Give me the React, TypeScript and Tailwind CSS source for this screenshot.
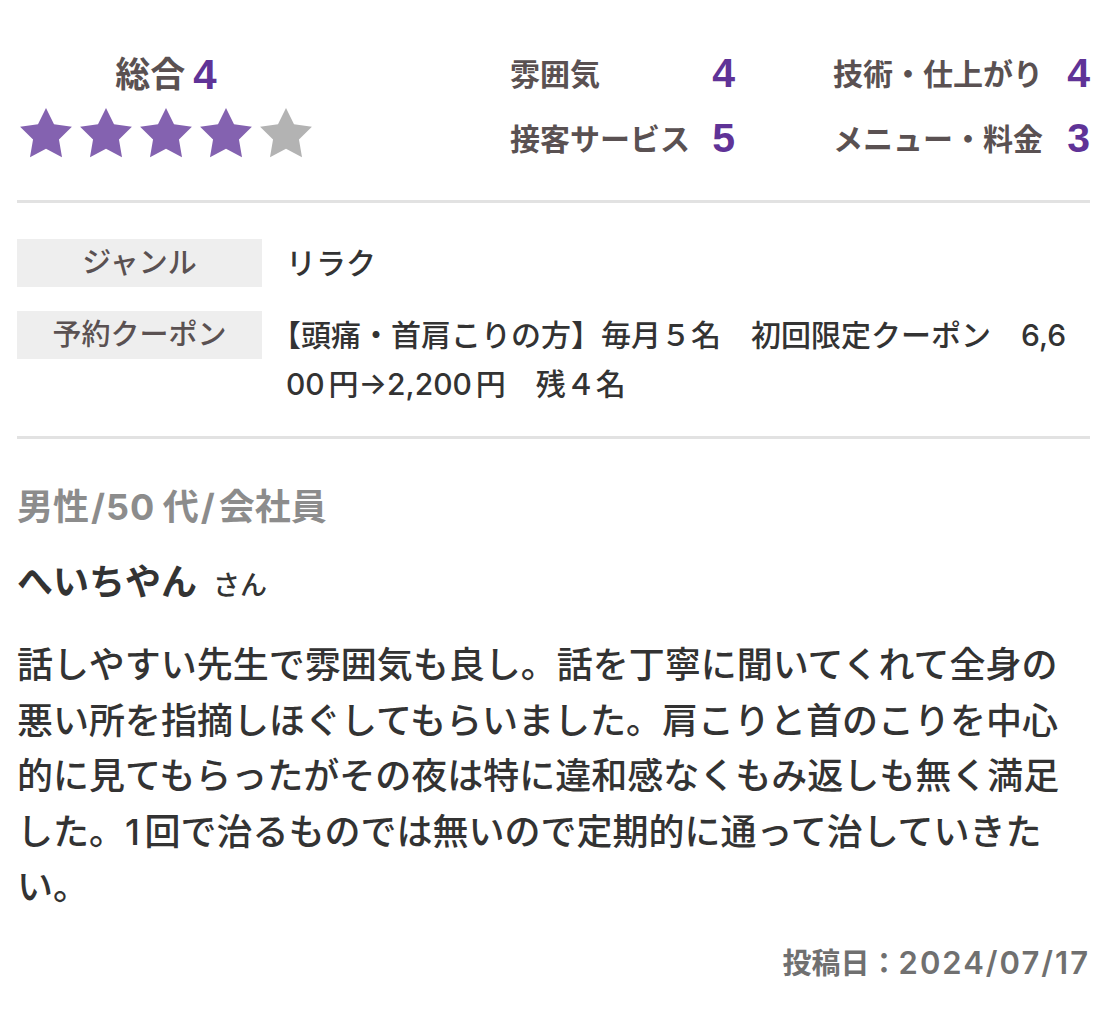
const jp = "font-['Inter','Noto_Sans_CJK_JP',sans-serif]";
const num = "font-['Liberation_Sans','Noto_Sans_CJK_JP',sans-serif] font-bold text-[#5f3397]";

const scores = [
  { label: "雰囲気", value: 4 },
  { label: "技術・仕上がり", value: 4 },
  { label: "接客サービス", value: 5 },
  { label: "メニュー・料金", value: 3 },
];

function Star({ filled }: { filled: boolean }) {
  return (
    <svg width="52" height="50" viewBox="2 2 20 19.3">
      <polygon
        points="12,2 15.09,8.26 22,9.27 17,14.14 18.18,21.02 12,17.77 5.82,21.02 7,14.14 2,9.27 8.91,8.26"
        fill={filled ? "#8462b0" : "#b3b3b3"}
      />
    </svg>
  );
}

export default function App() {
  return (
    <div className={`${jp} [text-autospace:normal] bg-white min-h-screen pl-[17px] pr-[18px] pt-[50px] pb-[40px]`}>
      {/* Ratings */}
      <div className="flex items-start">
        <div className="w-[298px] flex flex-col items-center">
          <div className="h-[48px] flex items-center gap-[8px]">
            <span className="text-[35px] font-bold text-[#5a5152]">総合</span>
            <span className={`${num} text-[42px]`}>4</span>
          </div>
          <div className="flex gap-[8px] mt-[10px]">
            {[1, 2, 3, 4, 5].map((i) => (
              <Star key={i} filled={i <= 4} />
            ))}
          </div>
        </div>
        <div className="ml-auto grid grid-cols-[225px_257px] gap-x-[98px] gap-y-[17px]">
          {scores.map((s) => (
            <div key={s.label} className="h-[48px] flex items-center justify-between">
              <span className="text-[30px] font-bold text-[#5a5152]">{s.label}</span>
              <span className={`${num} text-[41px]`}>{s.value}</span>
            </div>
          ))}
        </div>
      </div>

      <div className="h-[3px] bg-[#e2e2e2] mt-[37px]" />

      {/* Details */}
      <div className="grid grid-cols-[245px_1fr] gap-x-[24px] gap-y-[24px] mt-[36px]">
        <div className="h-[48px] bg-[#eeeeee] flex items-center justify-center text-[29px] font-medium text-[#5a5152]">
          ジャンル
        </div>
        <div className="text-[30px] font-medium text-[#333] leading-[48px]">リラク</div>
        <div className="h-[48px] bg-[#eeeeee] flex items-center justify-center text-[29px] font-medium text-[#5a5152]">
          予約クーポン
        </div>
        <div className="[text-spacing-trim:trim-start] text-[30px] font-medium text-[#333] leading-[49px]">
          【頭痛・首肩こりの方】毎月５名　初回限定クーポン　6,6
          <br />
          00円→2,200円　残４名
        </div>
      </div>

      <div className="h-[3px] bg-[#e2e2e2] mt-[27px]" />

      {/* Review */}
      <div className="mt-[44px] text-[36px] font-bold text-[#8c8c8c] leading-[48px]">
        男性<span className="ml-[2px] tracking-[1px]">/50</span>
        <span className="ml-[3px]">代</span>
        <span className="ml-[2px] mr-[4px]">/</span>会社員
      </div>
      <div className="mt-[27px] leading-[48px] text-[#333]">
        <span className="text-[36px] font-bold">へいちやん</span>
        <span className="text-[27px] font-medium ml-[16px]">さん</span>
      </div>
      <p className="mt-[25px] text-[36px] font-medium text-[#333] leading-[55.5px]">
        話しやすい先生で雰囲気も良し。話を丁寧に聞いてくれて全身の悪い所を指摘しほぐしてもらいました。肩こりと首のこりを中心的に見てもらったがその夜は特に違和感なくもみ返しも無く満足した。1回で治るものでは無いので定期的に通って治していきたい。
      </p>
      <div className="mt-[27px] text-right text-[29px] font-semibold text-[#707070] leading-[40px]">
        投稿日：<span className="text-[31px] tracking-[2px]">2024/07/17</span>
      </div>
    </div>
  );
}
